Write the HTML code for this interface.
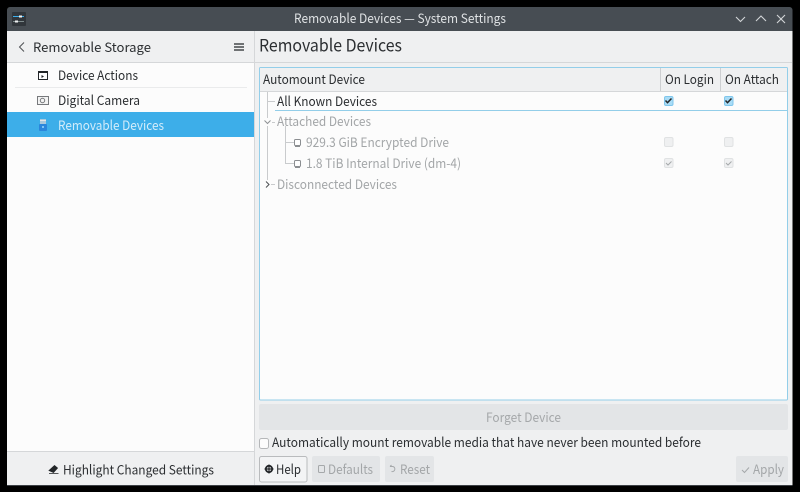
<!DOCTYPE html>
<html><head><meta charset="utf-8"><title>Removable Devices — System Settings</title>
<style>
html,body{margin:0;padding:0;background:#000;width:800px;height:492px;overflow:hidden}
svg{display:block}
text{font-family:"Noto Sans CJK SC","Liberation Sans",sans-serif;font-size:13px;fill:#2b2e31}
.d{fill:#a3a6a8}
</style></head><body>
<svg width="800" height="492" viewBox="0 0 800 492" xmlns="http://www.w3.org/2000/svg">
<rect width="800" height="492" fill="#000"/>
<!-- window -->
<path d="M10 7H789.5a3 3 0 0 1 3 3V31H7V10a3 3 0 0 1 3-3z" fill="#474d53"/>
<rect x="7" y="31" width="785.5" height="454.5" fill="#eff0f1"/>
<rect x="7" y="485" width="785.5" height="1" fill="#3c4045"/>
<!-- titlebar -->
<rect x="12" y="12" width="14" height="14" rx="1" fill="#31363b"/>
<rect x="13" y="16" width="11" height="1" fill="#3daee9"/><rect x="19" y="15.5" width="3" height="2" fill="#eff0f1"/>
<rect x="13" y="21" width="11" height="1" fill="#7f8c8d"/><rect x="15" y="20.5" width="3" height="2" fill="#eff0f1"/>
<text x="294" y="23" textLength="212" lengthAdjust="spacingAndGlyphs" style="fill:#dfe2e4">Removable Devices — System Settings</text>
<g fill="none" stroke="#d3d6d8" stroke-width="1.1">
<path d="M736 17l4.500 4.500 4.500-4.500"/>
<path d="M756 21l5-5 5 5"/>
<path d="M777 15l8 8M785 15l-8 8"/>
</g>
<!-- sidebar -->
<rect x="7" y="63" width="247" height="388" fill="#fcfcfc"/>
<rect x="7" y="62" width="247" height="1" fill="#d5d7d9"/>
<rect x="254" y="31" width="1" height="454" fill="#d5d7d9"/>
<rect x="7" y="451" width="247" height="1" fill="#d5d7d9"/>
<path d="M24 42.5l-4.500 4.500 4.500 4.500" fill="none" stroke="#4d5053" stroke-width="1"/>
<text x="33" y="52" textLength="118" lengthAdjust="spacingAndGlyphs">Removable Storage</text>
<path d="M234 44h10M234 47h10M234 50h10" stroke="#232629" stroke-width="1.3"/>
<rect x="15" y="87" width="232" height="1" fill="#eaebec"/>
<rect x="7" y="112" width="247" height="25" fill="#3daee9"/>
<rect x="38.5" y="71.5" width="9" height="8" fill="#fff" stroke="#232629"/><rect x="38" y="71" width="10" height="2" fill="#232629"/><path d="M41.5 75v3l2.500-1.500z" fill="#232629"/>
<rect x="37.5" y="96.5" width="11" height="8" fill="#f3f3f3" stroke="#77797c" stroke-width="1"/><circle cx="42.5" cy="100.5" r="2.200" fill="none" stroke="#77797c"/>
<rect x="40" y="119" width="6" height="5" fill="#a9c9dc"/><rect x="40" y="120" width="6" height="1" fill="#e4e6e8"/><rect x="39" y="124" width="8" height="7" rx="1" fill="#2a86dc"/><rect x="42" y="126" width="2" height="2" fill="#7fc4f2"/>
<text x="58" y="80" textLength="80" lengthAdjust="spacingAndGlyphs">Device Actions</text>
<text x="58" y="105" textLength="82" lengthAdjust="spacingAndGlyphs">Digital Camera</text>
<text x="58" y="130" textLength="106" lengthAdjust="spacingAndGlyphs" style="fill:#d3ecfa">Removable Devices</text>
<path d="M49 470.5l5.500-5 3 2.500-4 4.500zM49 473.5h9.500" fill="#232629" stroke="#232629" stroke-width="0.8"/>
<text x="63" y="474.5" textLength="151" lengthAdjust="spacingAndGlyphs">Highlight Changed Settings</text>
<!-- content -->
<rect x="255" y="62" width="537" height="1" fill="#d5d7d9"/>
<text x="259" y="51.5" textLength="143" lengthAdjust="spacingAndGlyphs" style="font-size:17px">Removable Devices</text>
<rect x="259.5" y="67.5" width="528" height="332.500" rx="1" fill="#fcfcfc" stroke="#93cee9"/>
<rect x="260" y="68" width="527" height="23" fill="#eff0f1"/>
<rect x="260" y="91" width="527" height="1" fill="#d5d7d9"/>
<rect x="660" y="68" width="1" height="23" fill="#cdcfd1"/>
<rect x="720" y="68" width="1" height="23" fill="#cdcfd1"/>
<text x="263" y="84" textLength="102" lengthAdjust="spacingAndGlyphs">Automount Device</text>
<text x="665" y="84" textLength="49" lengthAdjust="spacingAndGlyphs">On Login</text>
<text x="725" y="84" textLength="54" lengthAdjust="spacingAndGlyphs">On Attach</text>
<!-- selected row -->
<rect x="275" y="110" width="512" height="1" fill="#93cee9"/>
<!-- tree lines -->
<g fill="none" stroke="#c9cbcd" stroke-width="1">
<path d="M267.5 92v89M268 101.5h7M271 122.5h4M271 184.5h4"/>
<path d="M285.5 126v38M286 142.5h8M286 163.5h8"/>
</g>
<rect x="264" y="118" width="8" height="8" fill="#fcfcfc"/>
<rect x="264" y="180" width="7" height="9" fill="#fcfcfc"/>
<path d="M264.5 120.5l3 3 3-3" fill="none" stroke="#8e9194" stroke-width="1"/>
<path d="M266 181.5l3 3-3 3" fill="none" stroke="#4d5053" stroke-width="1"/>
<text x="277" y="106" textLength="100" lengthAdjust="spacingAndGlyphs">All Known Devices</text>
<text class="d" x="277" y="126" textLength="94" lengthAdjust="spacingAndGlyphs">Attached Devices</text>
<text class="d" x="306" y="147" textLength="143" lengthAdjust="spacingAndGlyphs">929.3 GiB Encrypted Drive</text>
<text class="d" x="306" y="168" textLength="155" lengthAdjust="spacingAndGlyphs">1.8 TiB Internal Drive (dm-4)</text>
<text class="d" x="277" y="189" textLength="120" lengthAdjust="spacingAndGlyphs">Disconnected Devices</text>
<g fill="#fff" stroke="#8b8e91" stroke-width="1">
<rect x="294.5" y="139.5" width="6" height="6" rx="1"/><rect x="294.5" y="160.5" width="6" height="6" rx="1"/>
</g>
<path d="M295 146.500h5M295 167.500h5" stroke="#8b8e91"/>
<!-- checkboxes -->
<g fill="#a9dcf6" stroke="#7fc6ec"><rect x="664.5" y="96.500" width="8.500" height="9" rx="1.500"/><rect x="724.5" y="96.500" width="8.500" height="9" rx="1.500"/></g>
<g fill="none" stroke="#232629" stroke-width="1.500"><path d="M665.5 100.5l2 2.200 4-4.200"/><path d="M725.5 100.5l2 2.200 4-4.200"/></g>
<g fill="#eff0f1" stroke="#e0e2e3"><rect x="664.5" y="137.500" width="8.500" height="9" rx="1.500"/><rect x="724.5" y="137.500" width="8.500" height="9" rx="1.500"/><rect x="664.5" y="158.500" width="8.500" height="9" rx="1.500"/><rect x="724.5" y="158.500" width="8.500" height="9" rx="1.500"/></g>
<g fill="none" stroke="#a5a8aa" stroke-width="1"><path d="M666 163l2 2 3.500-3.500"/><path d="M726 163l2 2 3.500-3.500"/></g>
<!-- forget -->
<rect x="259" y="404" width="529" height="26" rx="2" fill="#e3e5e7"/>
<text x="486" y="422" textLength="75" lengthAdjust="spacingAndGlyphs" style="fill:#a5a8aa">Forget Device</text>
<!-- auto mount -->
<rect x="259.500" y="438.500" width="9" height="10" rx="2" fill="#fcfcfc" stroke="#b5b7b9"/>
<text x="272" y="447" textLength="429" lengthAdjust="spacingAndGlyphs">Automatically mount removable media that have never been mounted before</text>
<!-- buttons -->
<rect x="259.500" y="456.500" width="47.500" height="25.500" rx="2" fill="#f3f4f5" stroke="#b9bbbd"/>
<circle cx="269" cy="469" r="3.200" fill="none" stroke="#232629" stroke-width="1.800"/><path d="M264.5 469h9M269 464.500v9" stroke="#232629" stroke-width="1.200"/>
<text x="276" y="474" textLength="25" lengthAdjust="spacingAndGlyphs">Help</text>
<rect x="312" y="456" width="68" height="26" rx="2" fill="#e3e5e7"/>
<rect x="318.500" y="465.500" width="6" height="7" rx="1" fill="none" stroke="#a5a8aa"/>
<text class="d" x="328" y="474" textLength="45" lengthAdjust="spacingAndGlyphs">Defaults</text>
<rect x="385" y="456" width="49" height="26" rx="2" fill="#e3e5e7"/>
<path d="M390 466.500h3a2.500 2.500 0 1 1-1.500 5M390 466.500l1.500-1.500" fill="none" stroke="#a5a8aa"/>
<text class="d" x="400" y="474" textLength="30" lengthAdjust="spacingAndGlyphs">Reset</text>
<rect x="736" y="456" width="52" height="26" rx="2" fill="#e3e5e7"/>
<path d="M742 470l2.500 2.500 4.500-5" fill="none" stroke="#a5a8aa"/>
<text class="d" x="753" y="474" textLength="31" lengthAdjust="spacingAndGlyphs">Apply</text>
</svg>
</body></html>
